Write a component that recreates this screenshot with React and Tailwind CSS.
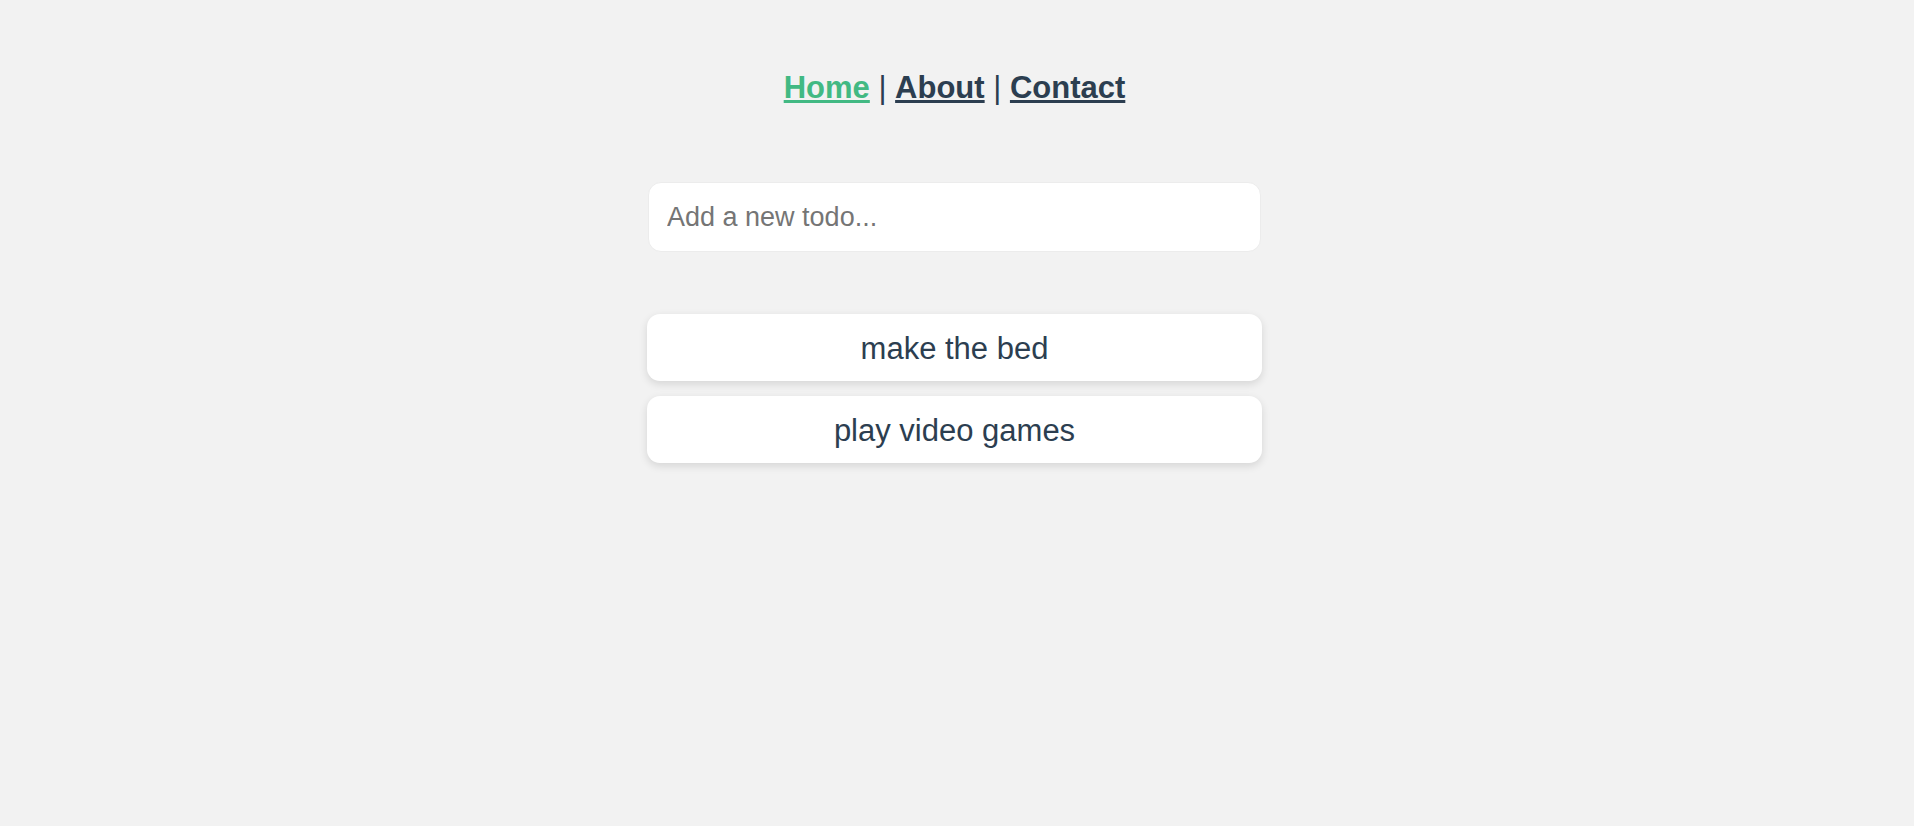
const todos = ['make the bed', 'play video games'];

export default function App() {
  return (
    <div className="min-h-screen bg-[#f2f2f2] text-[#2c3e50] font-['Liberation_Sans',Arial,sans-serif] flex flex-col items-center pt-[70px] pr-[5px]">
      <nav className="text-[31px] leading-[35px] font-bold">
        <a href="#" className="text-[#42b983] underline">Home</a>
        <span className="font-normal"> | </span>
        <a href="#" className="underline">About</a>
        <span className="font-normal"> | </span>
        <a href="#" className="underline">Contact</a>
      </nav>

      <input
        type="text"
        placeholder="Add a new todo..."
        className="mt-[77px] w-[613px] h-[70px] bg-white rounded-[13px] border border-[#ececec] px-[18px] text-[27px] outline-none placeholder:text-[#757575]"
      />

      <ul className="mt-[62px] flex flex-col gap-[15px]">
        {todos.map((t) => (
          <li
            key={t}
            className="w-[615px] h-[67px] bg-white rounded-[13px] shadow-[0_3px_8px_rgba(0,0,0,0.12)] flex items-center justify-center pt-[3px] text-[31px]"
          >
            {t}
          </li>
        ))}
      </ul>
    </div>
  );
}
